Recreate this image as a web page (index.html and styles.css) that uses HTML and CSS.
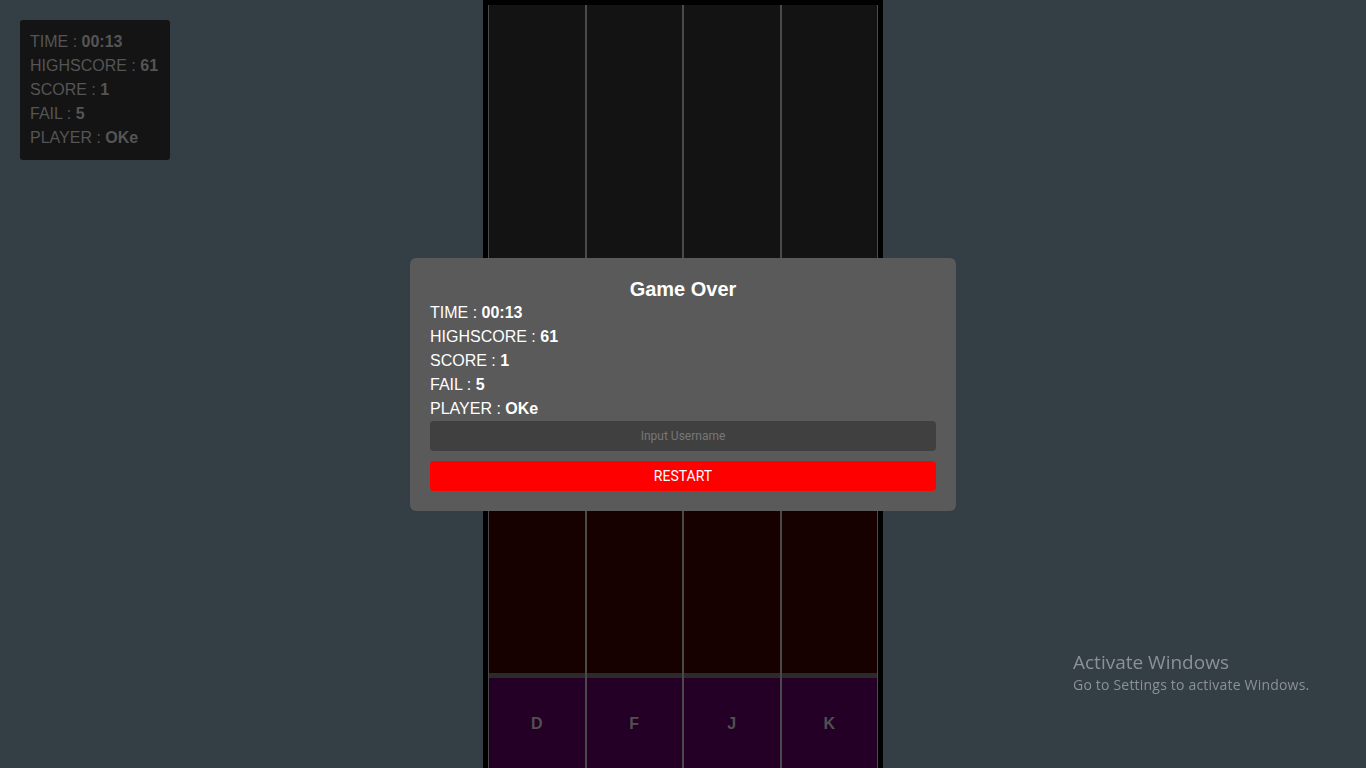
FILE: index.html
```html
<!DOCTYPE html>
<html lang="en">
<head>
<meta charset="utf-8">
<title>Piano Tiles</title>
<link rel="stylesheet" href="styles.css">
</head>
<body>
<div class="page">
  <div class="stats">
    <div class="stat">TIME : <b>00:13</b></div>
    <div class="stat">HIGHSCORE : <b>61</b></div>
    <div class="stat">SCORE : <b>1</b></div>
    <div class="stat">FAIL : <b>5</b></div>
    <div class="stat">PLAYER : <b>OKe</b></div>
  </div>

  <div class="board">
    <div class="lane">
      <div class="lane-top"></div>
      <div class="lane-zone"></div>
      <div class="lane-bar"></div>
      <div class="lane-key">D</div>
    </div>
    <div class="lane">
      <div class="lane-top"></div>
      <div class="lane-zone"></div>
      <div class="lane-bar"></div>
      <div class="lane-key">F</div>
    </div>
    <div class="lane">
      <div class="lane-top"></div>
      <div class="lane-zone"></div>
      <div class="lane-bar"></div>
      <div class="lane-key">J</div>
    </div>
    <div class="lane">
      <div class="lane-top"></div>
      <div class="lane-zone"></div>
      <div class="lane-bar"></div>
      <div class="lane-key">K</div>
    </div>
  </div>
</div>

<div class="overlay">
  <div class="modal">
    <h2 class="modal-title">Game Over</h2>
    <div class="modal-line">TIME : <b>00:13</b></div>
    <div class="modal-line">HIGHSCORE : <b>61</b></div>
    <div class="modal-line">SCORE : <b>1</b></div>
    <div class="modal-line">FAIL : <b>5</b></div>
    <div class="modal-line">PLAYER : <b>OKe</b></div>
    <input class="modal-input" type="text" placeholder="Input Username">
    <button class="modal-button" type="button">RESTART</button>
  </div>
</div>

<div class="watermark">
  <div class="wm-title">Activate Windows</div>
  <div class="wm-sub">Go to Settings to activate Windows.</div>
</div>
</body>
</html>
```

FILE: styles.css
```css
* { box-sizing: border-box; }

html, body {
  margin: 0;
  padding: 0;
  height: 100%;
}

body {
  background: #343e45;
  font-family: "Liberation Sans", Arial, sans-serif;
  overflow: hidden;
}

.page {
  position: relative;
  height: 768px;
  display: flex;
  justify-content: center;
}

.stats {
  position: absolute;
  left: 20px;
  top: 20px;
  width: 150px;
  height: 140px;
  background: #141414;
  border-radius: 3px;
  padding: 10px 10px 10px;
  color: #555555;
  font-size: 16px;
  line-height: 24px;
}

.stat b { font-weight: bold; }

.board {
  width: 400px;
  height: 768px;
  background: #000;
  padding: 5px 5px 0;
  display: flex;
}

.lane {
  flex: 1;
  display: flex;
  flex-direction: column;
  border-left: 1px solid #4a4a4a;
  border-right: 1px solid #4a4a4a;
}

.lane-top {
  flex: 1;
  background: #131313;
}

.lane-zone {
  height: 273px;
  background: #170000;
}

.lane-bar {
  height: 5px;
  background: #2b2b2b;
}

.lane-key {
  height: 90px;
  padding-top: 2px;
  background: #250026;
  color: #505050;
  font-weight: bold;
  font-size: 16px;
  display: flex;
  align-items: center;
  justify-content: center;
}

.overlay {
  position: fixed;
  inset: 0;
  display: flex;
  align-items: center;
  justify-content: center;
}

.modal {
  width: 546px;
  background: #5a5a5a;
  border-radius: 6px;
  padding: 20px;
  color: #ffffff;
  display: flex;
  flex-direction: column;
}

.modal-title {
  margin: 0;
  text-align: center;
  font-size: 20px;
  line-height: 23px;
  font-weight: bold;
}

.modal-line {
  font-size: 16px;
  line-height: 24px;
}

.modal-input {
  margin-top: 0;
  height: 30px;
  width: 100%;
  border: none;
  border-radius: 4px;
  background: #404040;
  color: #ddd;
  text-align: center;
  font-family: Roboto, sans-serif;
  font-size: 12px;
  outline: none;
}

.modal-input::placeholder {
  color: #777777;
}

.modal-button {
  margin-top: 10px;
  height: 30px;
  width: 100%;
  border: none;
  border-radius: 4px;
  background: #ff0000;
  color: #ffffff;
  font-family: Roboto, sans-serif;
  font-size: 14px;
  cursor: pointer;
}

.watermark {
  position: fixed;
  left: 1073px;
  top: 650px;
  color: #8b9196;
  font-family: "Open Sans", "Noto Sans", sans-serif;
}

.wm-title {
  font-size: 19px;
  line-height: 24px;
}

.wm-sub {
  font-size: 14px;
  line-height: 22px;
  letter-spacing: 0.2px;
}
```
